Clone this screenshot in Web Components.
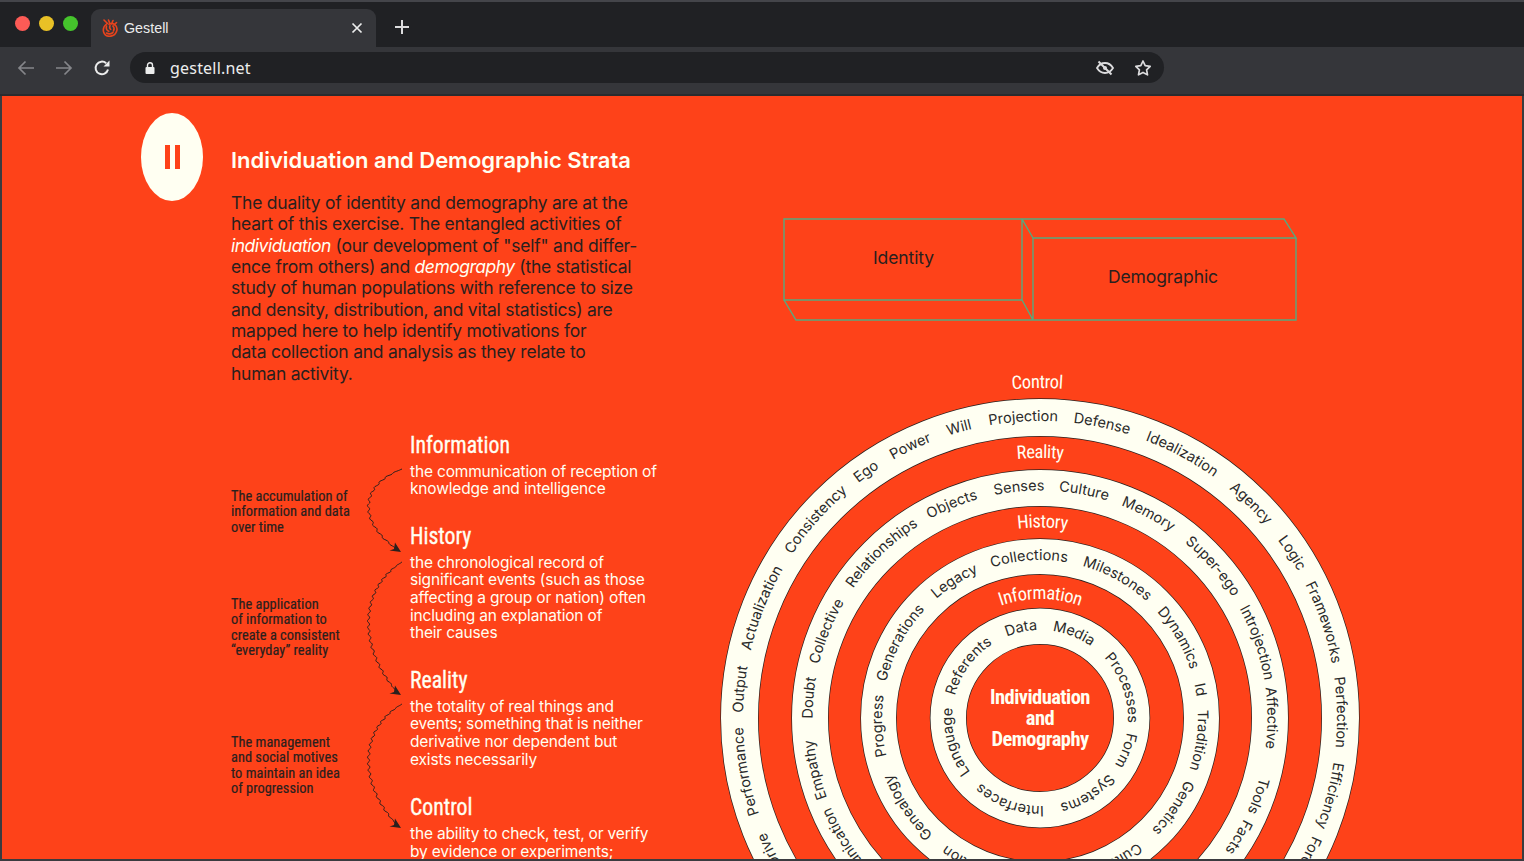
<!DOCTYPE html>
<html>
<head>
<meta charset="utf-8">
<title>Gestell</title>
<style>
  html, body { margin: 0; height: 100%; background: #202124; overflow: hidden; }
</style>
</head>
<body>
<browser-window>
  <strata-page>
    <strata-section badge="II">
      <span slot="title">Individuation and Demographic Strata</span>
      The duality of identity and demography are at the<br>
      heart of this exercise. The entangled activities of<br>
      <em>individuation</em> (our development of "self" and differ-<br>
      ence from others) and <em>demography</em> (the statistical<br>
      study of human populations with reference to size<br>
      and density, distribution, and vital statistics) are<br>
      mapped here to help identify motivations for<br>
      data collection and analysis as they relate to<br>
      human activity.
      <flow-list slot="flow">
        <flow-note slot="notes" span="84" style="--shift: 4px">The accumulation of<br>information and data<br>over time</flow-note>
        <flow-note slot="notes" span="134">The application<br>of information to<br>create a consistent<br>“everyday” reality</flow-note>
        <flow-note slot="notes" span="125">The management<br>and social motives<br>to maintain an idea<br>of progression</flow-note>
        <def-item term="Information">the communication of reception of<br>knowledge and intelligence</def-item>
        <def-item term="History">the chronological record of<br>significant events (such as those<br>affecting a group or nation) often<br>including an explanation of<br>their causes</def-item>
        <def-item term="Reality">the totality of real things and<br>events; something that is neither<br>derivative nor dependent but<br>exists necessarily</def-item>
        <def-item term="Control" style="margin-top: 1px">the ability to check, test, or verify<br>by evidence or experiments;</def-item>
      </flow-list>
    </strata-section>
    <strata-diagrams>
      <box-diagram></box-diagram>
      <ring-diagram></ring-diagram>
    </strata-diagrams>
  </strata-page>
</browser-window>

<script>
const SANS = `Inter, "Liberation Sans", sans-serif`;
const NARROW = `"Liberation Sans Narrow", "Roboto Condensed", "Liberation Sans", sans-serif`;

class BrowserWindow extends HTMLElement {
  constructor() {
    super();
    this.attachShadow({mode: 'open'}).innerHTML = `
      <style>
        :host { display: flex; flex-direction: column; height: 100vh; overflow: hidden; box-sizing: border-box; background: #202124; }
        .tabs { height: 47px; flex: none; display: flex; align-items: flex-end; box-sizing: border-box; border-top: 2px solid #44454a; background: #202124; }
        .lights { display: flex; gap: 9px; padding: 0 13px 0 15px; align-self: flex-start; margin-top: 14px; }
        .lights i { width: 15px; height: 15px; border-radius: 50%; display: block; }
        .tab { width: 285px; height: 38px; background: #35363a; border-radius: 9px 9px 0 0; display: flex; align-items: center; color: #eceded;
               font: 14.300px "Liberation Sans", sans-serif; box-sizing: border-box; padding: 0 13px 0 11px; }
        .tab span { flex: 1; margin-left: 6px; }
        .plus { align-self: flex-start; margin: 17px 0 0 18px; }
        .bar { height: 47px; flex: none; background: #35363a; display: flex; align-items: center; padding: 0 0 6px 17px; box-sizing: border-box; }
        .nav { width: 38px; display: flex; }
        .omni { width: 1034px; height: 31px; margin-left: -1px; border-radius: 16px; background: #202124; display: flex; align-items: center; box-sizing: border-box; padding: 0 12px 0 14px;
                color: #eceded; font: 16px "Noto Sans", "Open Sans", sans-serif; letter-spacing: .2px; }
        .omni .url { flex: 1; margin-left: 14px; }
        .omni svg + svg { margin-left: 19px; }
        .sep { height: 2px; flex: none; background: #2a2b2e; }
        .view { flex: 1; min-height: 0; overflow: hidden; display: flex; border-left: 2px solid #3a3b3f; border-right: 2px solid #3a3b3f; border-bottom: 2px solid #3a3b3f; }
        svg { display: block; flex: none; }
      </style>
      <div class="tabs">
        <div class="lights"><i style="background:#fd5b56"></i><i style="background:#e9c126"></i><i style="background:#45c42c"></i></div>
        <div class="tab">
          <svg width="16" height="18" viewBox="0 0 16 18" fill="none" stroke="#e8431c" stroke-width="1.600" stroke-linecap="round">
            <path d="M2 1l3.500 3.500M6.500 1l1.500 4M11 1.500L9.500 5M4.500 5C2 7 .8 10 1.600 13c.8 2.800 3.200 4.300 5.900 4.300 3.200 0 6.200-2 7.200-5.200.8-2.600-.2-5.200-2.200-6.700-1.800-1.300-4.500-1.500-5.500 0"/>
            <path d="M4.500 7c-.6 2.200 0 4.300 2.300 5.300M8 6.500c-.6 1.500-.4 3 .7 4M10.800 7c1.500 1.300 1.700 3 .7 5M4.500 14c2 1.200 4.500 1 6.500-.5M14.500 3.500l-2.500 2.500"/>
          </svg>
          <span>Gestell</span>
          <svg width="12" height="12" viewBox="0 0 12 12" stroke="#eceded" stroke-width="1.700"><path d="M1.500 1.500l9 9M10.500 1.500l-9 9"/></svg>
        </div>
        <svg class="plus" width="16" height="16" viewBox="0 0 16 16" stroke="#dcdcde" stroke-width="2"><path d="M8 1v14M1 8h14"/></svg>
      </div>
      <div class="bar">
        <div class="nav"><svg width="18" height="16" viewBox="0 0 18 16" fill="none" stroke="#85868a" stroke-width="1.700"><path d="M17 8H2M8.500 1.500L2 8l6.500 6.500"/></svg></div>
        <div class="nav"><svg width="18" height="16" viewBox="0 0 18 16" fill="none" stroke="#85868a" stroke-width="1.700"><path d="M1 8h15M9.500 1.500L16 8l-6.500 6.500"/></svg></div>
        <div class="nav"><svg width="18" height="18" viewBox="0 0 18 18" fill="none" stroke="#eceded" stroke-width="2"><path d="M15 10.500A6.300 6.300 0 1 1 13.200 4.300"/><path d="M16.500 1.500v6h-6z" fill="#eceded" stroke="none"/></svg></div>
        <div class="omni">
          <svg width="12" height="14" viewBox="0 0 12 14"><path d="M3.500 6V4.200a2.500 2.500 0 0 1 5 0V6" fill="none" stroke="#eceded" stroke-width="1.400"/><rect x="1.500" y="6" width="9" height="7" rx="1" fill="#eceded"/></svg>
          <span class="url">gestell.net</span>
          <svg width="20" height="16" viewBox="0 0 20 16" fill="none" stroke="#dcdcde" stroke-width="1.800"><path d="M2 8c2-3.300 4.800-5 8-5s6 1.700 8 5c-2 3.300-4.800 5-8 5s-6-1.700-8-5z"/><circle cx="10" cy="8" r="2" fill="#dcdcde" stroke="none"/><path d="M3.500 1.500l13 13" stroke-width="2"/></svg>
          <svg width="18" height="18" viewBox="0 0 18 18" fill="none" stroke="#dcdcde" stroke-width="1.700" stroke-linejoin="round"><path d="M9 2l2.200 4.600 5 .7-3.600 3.500.9 5L9 13.400l-4.500 2.400.9-5L1.800 7.300l5-.7z"/></svg>
        </div>
      </div>
      <div class="sep"></div>
      <div class="view"><slot></slot></div>
    `;
  }
}

class StrataPage extends HTMLElement {
  constructor() {
    super();
    this.attachShadow({mode: 'open'}).innerHTML = `
      <style>
        :host { display: flex; flex: 1; min-width: 0; background: #fe4219; padding-left: 139px; box-sizing: border-box; height: 100%; }
      </style>
      <slot></slot>
    `;
  }
}

class StrataSection extends HTMLElement {
  constructor() {
    super();
    this.attachShadow({mode: 'open'}).innerHTML = `
      <style>
        :host { display: flex; flex: none; width: 549px; gap: 28px; font-family: ${SANS}; }
        .badge { flex: none; width: 62px; height: 88px; margin-top: 17px; border-radius: 50%; background: #fffff2; display: flex; align-items: center; justify-content: center; gap: 5px; }
        .badge i { width: 5px; height: 24px; background: #fe4219; display: block; }
        .main { flex: 1; min-width: 0; padding-top: 50px; }
        h2 { margin: 0 0 18px; font-size: 22px; line-height: 28px; font-weight: 600; color: #fffff2; letter-spacing: -.03px; white-space: nowrap; }
        .text { font-size: 17.500px; line-height: 21.350px; color: #2a201e; letter-spacing: -.24px; white-space: nowrap; }
        ::slotted(em) { color: #fffff2; letter-spacing: -.5px; }
        .flow { margin-top: 48px; }
      </style>
      <div class="badge"><i></i><i></i></div>
      <div class="main">
        <h2><slot name="title"></slot></h2>
        <div class="text"><slot></slot></div>
        <div class="flow"><slot name="flow"></slot></div>
      </div>
    `;
  }
}

class FlowList extends HTMLElement {
  constructor() {
    super();
    this.attachShadow({mode: 'open'}).innerHTML = `
      <style>
        :host { display: flex; }
        .notes { flex: none; width: 171px; padding-top: 36px; display: flex; flex-direction: column; gap: 8.500px; }
        .defs { flex: none; margin-left: 8px; display: flex; flex-direction: column; gap: 25px; }
      </style>
      <div class="notes"><slot name="notes"></slot></div>
      <div class="defs"><slot></slot></div>
    `;
  }
}

class FlowNote extends HTMLElement {
  constructor() {
    super();
    const h = Number(this.getAttribute('span'));
    this.attachShadow({mode: 'open'}).innerHTML = `
      <style>
        :host { display: flex; align-items: center; height: ${h}px; }
        .note { flex: 1; font: 15.500px/15.500px ${NARROW}; color: #2a201e; white-space: nowrap; padding-top: var(--shift, 0); transform: scaleX(.93); transform-origin: left center; -webkit-text-stroke: .2px #2a201e; }
        svg { display: block; flex: none; overflow: visible; }
      </style>
      <div class="note"><slot></slot></div>
      <svg width="36" height="${h}" viewBox="0 0 36 ${h}">
        <path d="${this.wave(h)}" fill="none" stroke="#2a201e" stroke-width="1"/>
        <path d="M35 ${h} l-11.500 -1.500 4.500 -1.500 1 -6.500z" fill="#2a201e"/>
      </svg>
    `;
  }

  // long curved line with a small wobble, as if drawn by hand
  wave(h) {
    const pts = [];
    const steps = Math.round(h * 1.2);
    for (let i = 0; i <= steps; i++) {
      const t = i / steps, u = 1 - t;
      const x = u*u*u*36 + 3*u*u*t*(-9) + 3*u*t*t*(-7) + t*t*t*32;
      const y = u*u*u*1 + 3*u*u*t*(h*0.22) + 3*u*t*t*(h*0.66) + t*t*t*(h-2);
      const off = Math.sin(i * 0.85) * 1.100 * Math.min(1, Math.min(t, u) * 10);
      pts.push((x + off).toFixed(1) + ' ' + y.toFixed(1));
    }
    return 'M' + pts.join('L');
  }
}

class DefItem extends HTMLElement {
  constructor() {
    super();
    this.attachShadow({mode: 'open'}).innerHTML = `
      <style>
        :host { display: block; white-space: nowrap; }
        h3 { margin: 0 0 4.500px; font: 400 24px/26px ${NARROW}; color: #fffff2; transform: scaleX(.905); transform-origin: left center; -webkit-text-stroke: .35px #fffff2; }
        p { margin: 0; font: 15.500px/17.700px ${SANS}; color: #fffff2; letter-spacing: -.17px; }
      </style>
      <h3>${this.getAttribute('term')}</h3>
      <p><slot></slot></p>
    `;
  }
}

class StrataDiagrams extends HTMLElement {
  constructor() {
    super();
    this.attachShadow({mode: 'open'}).innerHTML = `
      <style>
        :host { display: flex; flex-direction: column; flex: none; width: 700px; padding-top: 122px; }
      </style>
      <slot></slot>
    `;
  }
}

class BoxDiagram extends HTMLElement {
  constructor() {
    super();
    this.attachShadow({mode: 'open'}).innerHTML = `
      <style>
        :host { display: block; margin-left: 93px; margin-bottom: 46px; }
        svg { display: block; }
        path { fill: none; stroke: #55ab80; stroke-width: 1.400; }
        text { font: 17.500px ${SANS}; fill: #2a201e; text-anchor: middle; letter-spacing: -.1px; }
      </style>
      <svg width="514" height="104" viewBox="783 218 514 104">
        <path d="M784 219H1022V300H784ZM784 300L796 320H1033L1022 300M1022 219L1033 238M1022 219H1284L1296 238H1033V320M1296 238V320H1033"/>
        <text x="903.500" y="264">Identity</text>
        <text x="1163" y="283">Demographic</text>
      </svg>
    `;
  }
}

const RINGS = [
  {
    inner: 282, outer: 319, base: 297,
    label: 'Control', labelBase: 330, labelAt: -.5,
    words: [['Projection',-3.2],['Defense',11.9],['Idealization',28.3],['Agency',44.5],['Logic',56.8],['Frameworks',71.4],['Perfection',88.9],['Efficiency',105],['Force',117],
            ['Will',-15.6],['Power',-25.5],['Ego',-35.2],['Consistency',-48.5],['Actualization',-68.4],['Output',-84.5],['Performance',-100.3],['Drive',-116]]
  },
  {
    inner: 212, outer: 248, base: 227.5,
    label: 'Reality', labelBase: 260, labelAt: 0,
    words: [['Senses',-5.2],['Culture',11],['Memory',28],['Super-ego',48.7],['Introjection',70.9],['Affective',90],['Tools',109.7],['Facts',121],
            ['Objects',-22.4],['Relationships',-43.8],['Collective',-67.9],['Doubt',-85],['Empathy',-103],['Communication',-126.5]]
  },
  {
    inner: 144, outer: 179, base: 158,
    label: 'History', labelBase: 190.5, labelAt: .7,
    words: [['Collections',-3.9],['Milestones',29],['Dynamics',60],['Id',80],['Tradition',98],['Genetics',124],['Culture',151],
            ['Legacy',-32],['Generations',-61.8],['Progress',-92.8],['Genealogy',-124],['Evolution',-155]]
  },
  {
    inner: 74, outer: 109.5, base: 88,
    label: 'Information', labelBase: 119, labelAt: .2,
    words: [['Data',-12],['Media',21.8],['Processes',70],['Form',110.8],['Systems',148],['Interfaces',-160],['Language',-105.6],['Referents',-54]]
  }
];

class RingDiagram extends HTMLElement {
  constructor() {
    super();
    const cx = 350, cy = 350;
    let defs = '', body = '', n = 0;
    const word = (text, angle, r, cls) => {
      n++;
      // circle starts at the bottom so that 50% of the path is the top
      defs += `<path id="p${n}" d="M${cx} ${cy + r}A${r} ${r} 0 1 1 ${cx} ${cy - r}A${r} ${r} 0 1 1 ${cx} ${cy + r}"/>`;
      return `<text class="${cls}" transform="rotate(${angle} ${cx} ${cy})"><textPath href="#p${n}" startOffset="50%">${text}</textPath></text>`;
    };
    RINGS.forEach(ring => {
      const w = ring.outer - ring.inner, mid = (ring.outer + ring.inner) / 2;
      body += `<circle cx="${cx}" cy="${cy}" r="${mid}" fill="none" stroke="#2a201e" stroke-width="${w + 1.4}"/>`;
      body += `<circle cx="${cx}" cy="${cy}" r="${mid}" fill="none" stroke="#fffff2" stroke-width="${w}"/>`;
      ring.words.forEach(([text, angle]) => { body += word(text, angle, ring.base, 'w'); });
      body += word(ring.label, ring.labelAt, ring.labelBase, 'l');
    });
    this.attachShadow({mode: 'open'}).innerHTML = `
      <style>
        :host { display: block; }
        svg { display: block; overflow: visible; }
        .w { font: 14.500px ${SANS}; fill: #2a2a2a; text-anchor: middle; }
        .l { font: 18.500px ${NARROW}; fill: #fffff2; text-anchor: middle; letter-spacing: -.4px; }
        .c { font: 700 20.500px ${NARROW}; fill: #fffff2; text-anchor: middle; letter-spacing: -.55px; }
      </style>
      <svg width="700" height="700" viewBox="0 0 700 700">
        <defs>${defs}</defs>
        ${body}
        <text class="c" x="350" y="336">Individuation</text>
        <text class="c" x="350" y="357">and</text>
        <text class="c" x="350" y="378">Demography</text>
      </svg>
    `;
  }
}

customElements.define('browser-window', BrowserWindow);
customElements.define('strata-page', StrataPage);
customElements.define('strata-section', StrataSection);
customElements.define('flow-list', FlowList);
customElements.define('flow-note', FlowNote);
customElements.define('def-item', DefItem);
customElements.define('strata-diagrams', StrataDiagrams);
customElements.define('box-diagram', BoxDiagram);
customElements.define('ring-diagram', RingDiagram);
</script>
</body>
</html>
